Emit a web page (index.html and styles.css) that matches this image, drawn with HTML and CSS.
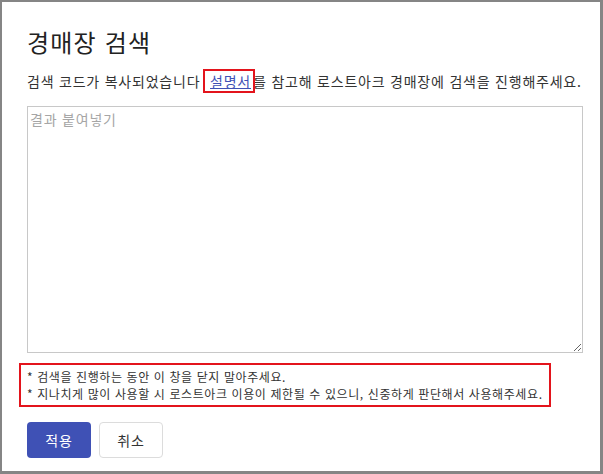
FILE: index.html
```html
<!DOCTYPE html>
<html lang="ko">
<head>
<meta charset="utf-8">
<link rel="stylesheet" href="styles.css">
</head>
<body>
<div class="frame">
  <div class="dialog">
    <h1 class="title">경매장 검색</h1>
    <p class="desc">검색 코드가 복사되었습니다 <a class="guide" href="#">설명서</a>를 참고해 로스트아크 경매장에 검색을 진행해주세요.</p>
    <textarea class="result" placeholder="결과 붙여넣기"></textarea>
    <div class="notes">
      <div class="note">* 검색을 진행하는 동안 이 창을 닫지 말아주세요.</div>
      <div class="note">* 지나치게 많이 사용할 시 로스트아크 이용이 제한될 수 있으니, 신중하게 판단해서 사용해주세요.</div>
    </div>
    <div class="actions">
      <button class="btn primary">적용</button>
      <button class="btn secondary">취소</button>
    </div>
  </div>
</div>
</body>
</html>
```

FILE: styles.css
```css
html, body {
  margin: 0;
  padding: 0;
  background: #ffffff;
}
body {
  font-family: "Noto Sans CJK KR", "Noto Sans", sans-serif;
  color: #333333;
}
.frame {
  box-sizing: border-box;
  width: 603px;
  height: 474px;
  border-style: solid;
  border-color: #858585;
  border-width: 2px 3px 3px 2px;
  background: #ffffff;
}
.dialog {
  display: flex;
  flex-direction: column;
  padding: 24px 18px 0 25px;
}
.title {
  margin: 0;
  font-size: 24px;
  font-weight: 400;
  line-height: 32px;
  letter-spacing: 1.2px;
  color: #222222;
}
.desc {
  margin: 12px 0 0 0;
  font-size: 14px;
  line-height: 22px;
  letter-spacing: 0.78px;
  color: #333333;
  white-space: nowrap;
}
.guide {
  color: #3f51b5;
  text-decoration: underline;
  outline: 2px solid #e3141c;
  outline-offset: 0px;
  padding: 0 2px 0 5px;
}
.result {
  box-sizing: border-box;
  margin: 14px 0 0 0;
  width: 556px;
  height: 247px;
  border: 1px solid #c8c8c8;
  padding: 2px 2px;
  font-family: "Noto Sans CJK KR", "Noto Sans", sans-serif;
  font-size: 14px;
  line-height: 20px;
  letter-spacing: 0.8px;
  color: #333333;
  resize: both;
}
.result::placeholder {
  color: #a6a6a6;
}
.notes {
  box-sizing: border-box;
  margin: 10px 0 0 -8px;
  width: 532px;
  border: 2px solid #e3141c;
  padding: 3px 6px 3px 6px;
  font-size: 12px;
  line-height: 17px;
  letter-spacing: 0.6px;
  color: #333333;
}
.note {
  white-space: nowrap;
}
.actions {
  display: flex;
  gap: 8px;
  margin-top: 15px;
}
.btn {
  box-sizing: border-box;
  width: 64px;
  height: 36px;
  border-radius: 4px;
  font-family: "Noto Sans CJK KR", "Noto Sans", sans-serif;
  font-size: 14px;
  letter-spacing: 0.8px;
  padding: 0;
}
.primary {
  background: #3f51b5;
  color: #ffffff;
  border: none;
}
.secondary {
  background: #ffffff;
  color: #333333;
  border: 1px solid #dcdcdc;
}
```
